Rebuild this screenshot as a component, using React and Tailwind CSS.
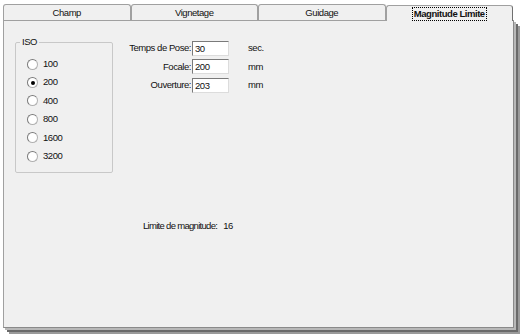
import React from "react";

const tabs = ["Champ", "Vignetage", "Guidage", "Magnitude Limite"];
const isoValues = ["100", "200", "400", "800", "1600", "3200"];

const Radio = ({ checked }) => (
  <span className="w-[11px] h-[11px] rounded-full bg-white border border-[#b0b0b0] border-t-[#7a7a7a] border-l-[#7a7a7a] flex items-center justify-center shrink-0">
    {checked && <span className="w-[4px] h-[4px] rounded-full bg-black" />}
  </span>
);

const Field = ({ label, value, unit }) => (
  <div className="flex items-center h-[18.5px]">
    <span className="w-[70px] text-right pr-[1px] whitespace-nowrap">{label}</span>
    <span className="w-[37px] h-[15px] bg-white border border-[#7a7a7a] border-r-[#dcdcdc] border-b-[#dcdcdc] pl-[2px] leading-[14px]">
      {value}
    </span>
    <span className="ml-[19px]">{unit}</span>
  </div>
);

export default function App() {
  return (
    <div
      className="w-[521px] h-[336px] bg-white text-[9.5px] tracking-[-0.45px] text-[#111] overflow-hidden"
      style={{ fontFamily: '"Liberation Sans", Arial, sans-serif' }}
    >
      <div className="pl-[3px] pt-[4px]">
        {/* tab strip */}
        <div className="flex h-[16px] w-[510px] items-end">
          {tabs.map((t, i) => {
            const active = i === tabs.length - 1;
            return (
              <div
                key={t}
                className={
                  active
                    ? "flex-1 h-[16px] bg-[#f0f0f0] border border-b-0 border-[#a0a0a0] border-r-[#707070] rounded-t-[3px] flex items-center justify-center relative z-10 -mb-px"
                    : "flex-1 h-[16px] bg-[#f0f0f0] border border-b-0 border-[#a0a0a0] rounded-t-[3px] flex items-center justify-center"
                }
              >
                {active ? (
                  <span className="font-bold border border-dotted border-black px-[1px] leading-[12px]">{t}</span>
                ) : (
                  <span className="leading-[12px]">{t}</span>
                )}
              </div>
            );
          })}
        </div>
        {/* panel */}
        <div className="w-[511px] h-[308px] bg-[#f0f0f0] border border-[#a0a0a0] border-r-[#8a8a8a] border-b-[#8a8a8a] shadow-[2px_2px_0_#b8b8b8,4px_4px_0_#6a6a6a,6px_6px_0_#9a9a9a] flex flex-col">
          <div className="flex pt-[19px] pl-[11px]">
            {/* ISO group */}
            <fieldset className="w-[98px] h-[136px] border border-[#c8c8c8] rounded-[2px] px-0 m-0 -mt-[3px]">
              <legend className="ml-[4px] px-[2px] leading-[10px]">ISO</legend>
              <div className="flex flex-col pl-[11px] pt-[8px]">
                {isoValues.map((v) => (
                  <div key={v} className="flex items-center gap-[5px] h-[18.4px]">
                    <Radio checked={v === "200"} />
                    <span>{v}</span>
                  </div>
                ))}
              </div>
            </fieldset>
            {/* fields */}
            <div className="ml-[9px] -mt-[1px] flex flex-col">
              <Field label="Temps de Pose:" value="30" unit="sec." />
              <Field label="Focale:" value="200" unit="mm" />
              <Field label="Ouverture:" value="203" unit="mm" />
            </div>
          </div>
          <div className="mt-[46px] pl-[139px] flex">
            <span className="shrink-0 whitespace-nowrap tracking-[-0.7px]">Limite de magnitude:</span>
            <span className="ml-[6px]">16</span>
          </div>
        </div>
      </div>
    </div>
  );
}
